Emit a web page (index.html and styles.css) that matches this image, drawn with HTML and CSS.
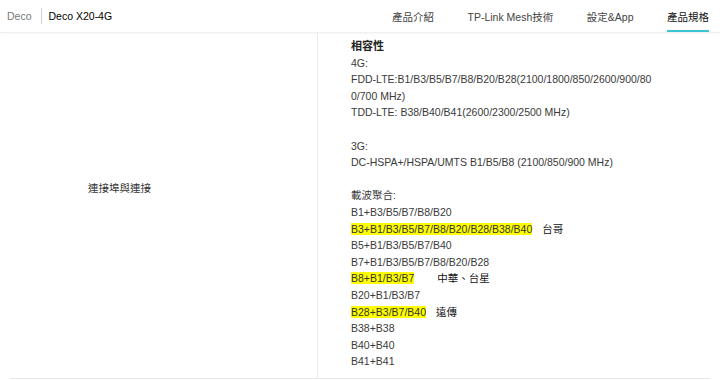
FILE: index.html
```html
<!DOCTYPE html>
<html lang="zh-Hant">
<head>
  <meta charset="UTF-8" />
  <meta name="viewport" content="width=device-width, initial-scale=1.0"/>
  <title>Deco X20-4G 產品規格</title>
  <link rel="stylesheet" href="styles.css">
</head>
<body>

  <header class="topbar">
    <div class="brand">
      <span class="brand-family">Deco</span>
      <span class="brand-sep"></span>
      <span class="brand-model">Deco X20-4G</span>
    </div>
    <nav class="nav">
      <a href="#">產品介紹</a>
      <a href="#">TP-Link Mesh技術</a>
      <a href="#">設定&amp;App</a>
      <a href="#" class="active">產品規格</a>
    </nav>
  </header>

  <div class="spec-table">
    <div class="spec-row">
      <div class="spec-name">連接埠與連接</div>
      <div class="spec-value">
        <strong class="spec-title">相容性</strong><br>
        4G:<br>
        FDD-LTE:B1/B3/B5/B7/B8/B20/B28(2100/1800/850/2600/900/80<br>0/700 MHz)<br>
        TDD-LTE: B38/B40/B41(2600/2300/2500 MHz)<br>
        <br>
        3G:<br>
        DC-HSPA+/HSPA/UMTS B1/B5/B8 (2100/850/900 MHz)<br>
        <br>
        載波聚合:<br>
        B1+B3/B5/B7/B8/B20<br>
        <mark>B3+B1/B3/B5/B7/B8/B20/B28/B38/B40</mark><span class="carrier">台哥</span><br>
        B5+B1/B3/B5/B7/B40<br>
        B7+B1/B3/B5/B7/B8/B20/B28<br>
        <mark>B8+B1/B3/B7</mark><span class="carrier wide">中華、台星</span><br>
        B20+B1/B3/B7<br>
        <mark>B28+B3/B7/B40</mark><span class="carrier">遠傳</span><br>
        B38+B38<br>
        B40+B40<br>
        B41+B41
      </div>
    </div>
  </div>

</body>
</html>
```

FILE: styles.css
```css
body {
  font-family: "Liberation Sans", Arial, "Noto Sans CJK TC", sans-serif;
  font-size: 10.5px;
  color: #3a3a3a;
  background: #fff;
  margin: 0;
  padding: 0;
}
.topbar {
  display: flex;
  justify-content: space-between;
  align-items: center;
  height: 33px;
  padding: 0 11px 0 7px;
  border-bottom: 1px solid #eef1f4;
  box-shadow: 0 1px 3px rgba(0,0,0,0.04);
  box-sizing: border-box;
}
.brand {
  display: flex;
  align-items: center;
}
.brand-family {
  color: #777;
}
.brand-sep {
  width: 1px;
  height: 16px;
  background: #cfcfcf;
  margin: 0 7px 0 9px;
}
.brand-model {
  color: #000;
}
.nav {
  display: flex;
  gap: 33.5px;
  height: 100%;
}
.nav a {
  display: flex;
  align-items: center;
  color: #444;
  text-decoration: none;
  border-bottom: 2px solid transparent;
  padding-top: 2px;
  box-sizing: border-box;
}
.nav a.active {
  color: #111;
  border-bottom-color: #3bc3d2;
}
.spec-table {
  margin: 0 10px;
  border-bottom: 1px solid #e8e8e8;
}
.spec-row {
  display: flex;
}
.spec-name {
  width: 308px;
  flex-shrink: 0;
  display: flex;
  align-items: center;
  justify-content: center;
  padding: 0 88px 36px 0;
  box-sizing: border-box;
  border-right: 1px solid #ececec;
  color: #333;
}
.spec-value {
  padding: 5px 0 8px 33px;
  line-height: 16.6px;
}
.spec-title {
  font-size: 11px;
  color: #222;
}
mark {
  background: #ffff00;
  color: #333;
}
.carrier {
  margin-left: 10px;
  color: #111;
}
.carrier.wide {
  margin-left: 23px;
}
```
